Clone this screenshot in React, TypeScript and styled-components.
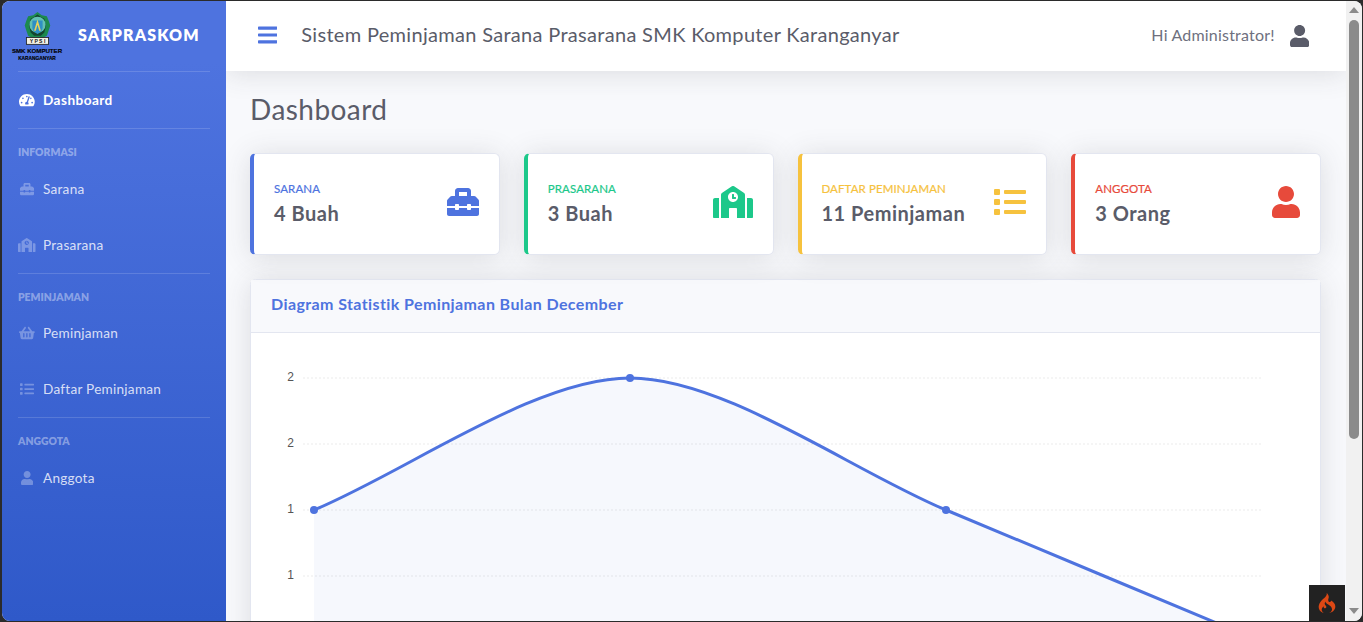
import styled, { createGlobalStyle } from "styled-components";
import { ReactNode } from "react";
import { FaBars, FaList, FaSchool, FaShoppingBasket, FaTachometerAlt, FaToolbox, FaUser } from "react-icons/fa";
import { SiCodeigniter } from "react-icons/si";

const GlobalStyle = createGlobalStyle`
  html, body {
    margin: 0;
    height: 100%;
    overflow: hidden;
    background: #2b2b2b;
  }
  body {
    font-family: "Lato", "Open Sans", sans-serif;
    color: #5a5c69;
  }
  * {
    box-sizing: border-box;
  }
`;

const blue = "#4e73df";
const green = "#1cc88a";
const yellow = "#f6c23e";
const red = "#e74a3b";

function Logo() {
  return (
    <LogoBox>
      <svg width="29" height="36" viewBox="0 0 34 40">
        <polygon points="17,0 22,4 28,5 30,10 32,16 30,22 28,28 22,31 12,31 6,28 4,22 2,16 4,10 6,5 12,4" fill="#1d8a4e" />
        <polygon points="17,3 21,6 25,8 27,16 25,24 21,28 13,28 9,24 7,16 9,8 13,6" fill="#13452f" />
        <circle cx="17" cy="15" r="9.5" fill="#62c0b4" />
        <path d="M11 10h12v8c0 4-3 6-6 8-3-2-6-4-6-8z" fill="#2f8fc4" />
        <path d="M17 9l4 13h-2l-2-7-2 7h-2z" fill="#e8d25a" />
        <rect x="4" y="30" width="26" height="8" fill="#f4f1e4" stroke="#222" strokeWidth="1" />
        <text x="17" y="36.5" textAnchor="middle" fontSize="6" fontWeight="700" fontFamily="Liberation Sans, sans-serif" fill="#111">
          Y P S I
        </text>
      </svg>
      <LogoName>SMK KOMPUTER</LogoName>
      <LogoCity>KARANGANYAR</LogoCity>
    </LogoBox>
  );
}

function StatCard(props: { color: string; label: string; value: string; ratio?: number; icon: ReactNode }) {
  return (
    <Card $color={props.color}>
      <div>
        <CardLabel $color={props.color}>{props.label}</CardLabel>
        <CardValue>{props.value}</CardValue>
      </div>
      <CardIcon $color={props.color} $ratio={props.ratio}>{props.icon}</CardIcon>
    </Card>
  );
}

function Chart() {
  // koordinat mengikuti area chart, titik data jaraknya 316px
  const line = "M63 177C157.8 137.4 284.2 45 379 45C473.8 45 600.2 137.4 695 177C789.8 216.6 916.2 269.4 1011 309";
  const rows = [45, 111, 177, 243];
  const labels = ["2", "2", "1", "1"];
  return (
    <ChartSvg viewBox="0 0 1068 340">
      {rows.map((y, i) => (
        <g key={y}>
          <line x1="52" x2="1011" y1={y} y2={y} stroke="#ebebeb" strokeDasharray="2 2" />
          <text x="43" y={y + 3} textAnchor="end" fontSize="12" fontFamily="Liberation Sans, sans-serif" fill="#555">
            {labels[i]}
          </text>
        </g>
      ))}
      <path d={line + "V340H63Z"} fill="rgba(78, 115, 223, 0.05)" />
      <path d={line} fill="none" stroke={blue} strokeWidth="3" />
      <circle cx="63" cy="177" r="4" fill={blue} />
      <circle cx="379" cy="45" r="4" fill={blue} />
      <circle cx="695" cy="177" r="4" fill={blue} />
    </ChartSvg>
  );
}

export default function App() {
  return (
    <>
      <GlobalStyle />
      <Frame>
        <Sidebar>
          <Brand>
            <Logo />
            <BrandText>SARPRASKOM</BrandText>
          </Brand>
          <Divider />
          <NavItem $active>
            <NavIcon $active $ratio={1.125}><FaTachometerAlt /></NavIcon>
            Dashboard
          </NavItem>
          <SectionDivider />
          <NavHeading>INFORMASI</NavHeading>
          <NavItem>
            <NavIcon><FaToolbox /></NavIcon>
            Sarana
          </NavItem>
          <NavItem>
            <NavIcon $ratio={1.25}><FaSchool /></NavIcon>
            Prasarana
          </NavItem>
          <SectionDivider />
          <NavHeading>PEMINJAMAN</NavHeading>
          <NavItem>
            <NavIcon $ratio={1.125}><FaShoppingBasket /></NavIcon>
            Peminjaman
          </NavItem>
          <NavItem>
            <NavIcon><FaList /></NavIcon>
            Daftar Peminjaman
          </NavItem>
          <SectionDivider />
          <NavHeading>ANGGOTA</NavHeading>
          <NavItem>
            <NavIcon $ratio={0.875}><FaUser /></NavIcon>
            Anggota
          </NavItem>
        </Sidebar>
        <Main>
          <Topbar>
            <MenuButton><FaBars /></MenuButton>
            <TopTitle>Sistem Peminjaman Sarana Prasarana SMK Komputer Karanganyar</TopTitle>
            <UserName>Hi Administrator!</UserName>
            <UserIcon><FaUser /></UserIcon>
          </Topbar>
          <Content>
            <PageTitle>Dashboard</PageTitle>
            <CardRow>
              <StatCard color={blue} label="SARANA" value="4 Buah" icon={<FaToolbox />} />
              <StatCard color={green} label="PRASARANA" value="3 Buah" ratio={1.25} icon={<FaSchool />} />
              <StatCard color={yellow} label="DAFTAR PEMINJAMAN" value="11 Peminjaman" icon={<FaList />} />
              <StatCard color={red} label="ANGGOTA" value="3 Orang" ratio={0.875} icon={<FaUser />} />
            </CardRow>
            <ChartCard>
              <ChartHeader>Diagram Statistik Peminjaman Bulan December</ChartHeader>
              <Chart />
            </ChartCard>
          </Content>
          <DebugBadge><SiCodeigniter /></DebugBadge>
        </Main>
        <Scrollbar>
          <ArrowUp />
          <Thumb />
          <ArrowDown />
        </Scrollbar>
      </Frame>
    </>
  );
}

const Frame = styled.div`
  margin: 1px 1px 1px 2px;
  height: calc(100vh - 2px);
  display: flex;
  overflow: hidden;
  border-radius: 8px;
  background: #f8f9fc;
`;

const Sidebar = styled.nav`
  width: 224px;
  flex: none;
  background: linear-gradient(180deg, #4e73df 10%, #2f59c9 100%);
`;

const Brand = styled.div`
  height: 70px;
  display: flex;
  align-items: center;
  padding-left: 10px;
`;

const LogoBox = styled.div`
  width: 50px;
  display: flex;
  flex-direction: column;
  align-items: center;
`;

const LogoName = styled.div`
  font-family: "Liberation Sans", sans-serif;
  font-size: 6.1px;
  line-height: 8px;
  font-weight: 700;
  -webkit-text-stroke: 0.15px #000;
  color: #000;
  white-space: nowrap;
`;

const LogoCity = styled.div`
  font-family: "Liberation Sans", sans-serif;
  font-size: 4.8px;
  line-height: 7px;
  font-weight: 700;
  -webkit-text-stroke: 0.15px #000;
  color: #000;
  white-space: nowrap;
`;

const BrandText = styled.div`
  margin-left: 16px;
  padding-bottom: 3px;
  font-size: 16px;
  font-weight: 800;
  letter-spacing: 1.1px;
  color: #fff;
`;

const Divider = styled.hr`
  margin: 0 16px;
  border: 0;
  border-top: 1px solid rgba(255, 255, 255, 0.15);
`;

const SectionDivider = styled(Divider)`
  margin-bottom: 16px;
`;

const NavHeading = styled.div`
  padding: 0 16px;
  font-size: 10.4px;
  line-height: 15.6px;
  font-weight: 800;
  color: rgba(255, 255, 255, 0.4);
`;

const NavItem = styled.div<{ $active?: boolean }>`
  height: 56px;
  display: flex;
  align-items: center;
  padding-left: 16px;
  font-size: 13.6px;
  letter-spacing: ${(p) => (p.$active ? "0.45px" : "0.25px")};
  font-weight: ${(p) => (p.$active ? 700 : 400)};
  color: ${(p) => (p.$active ? "#fff" : "rgba(255, 255, 255, 0.8)")};
`;

const NavIcon = styled.span<{ $active?: boolean; $ratio?: number }>`
  width: 18px;
  margin-right: 7px;
  display: flex;
  justify-content: center;
  font-size: 14px;
  color: ${(p) => (p.$active ? "#fff" : "rgba(255, 255, 255, 0.3)")};
  svg {
    flex: none;
    width: ${(p) => p.$ratio ?? 1}em;
  }
`;

const Main = styled.main`
  position: relative;
  flex: 1;
  min-width: 0;
  overflow: hidden;
`;

const Topbar = styled.header`
  position: relative;
  height: 70px;
  display: flex;
  align-items: center;
  padding: 0 37px 0 32px;
  background: #fff;
  box-shadow: 0 2.4px 28px rgba(58, 59, 69, 0.15);
`;

const MenuButton = styled.div`
  display: flex;
  padding-bottom: 2px;
  font-size: 22px;
  color: ${blue};
  svg {
    width: 0.875em;
  }
`;

const TopTitle = styled.div`
  flex: 1;
  margin-left: 24px;
  padding-bottom: 5px;
  font-size: 20px;
  letter-spacing: 0.31px;
  color: #5a5c69;
`;

const UserName = styled.div`
  padding-bottom: 3px;
  font-size: 16px;
  letter-spacing: 0.2px;
  color: #6e707e;
`;

const UserIcon = styled.div`
  display: flex;
  margin-left: 15px;
  font-size: 22px;
  color: #5a5c69;
  svg {
    width: 0.875em;
  }
`;

const Content = styled.div`
  padding: 22px 25px 0 24px;
`;

const PageTitle = styled.h1`
  margin: 0 0 26px;
  font-size: 28px;
  line-height: 33.6px;
  font-weight: 400;
  letter-spacing: 0.45px;
  color: #5a5c69;
`;

const CardRow = styled.div`
  display: grid;
  grid-template-columns: repeat(4, 1fr);
  gap: 24px;
`;

const Card = styled.div<{ $color: string }>`
  height: 102px;
  display: flex;
  align-items: center;
  justify-content: space-between;
  padding: 0 20px 0 20px;
  background: #fff;
  border: 1px solid #e3e6f0;
  border-left: 4px solid ${(p) => p.$color};
  border-radius: 5.6px;
  box-shadow: 0 2.4px 28px rgba(58, 59, 69, 0.15);
`;

const CardLabel = styled.div<{ $color: string }>`
  margin-top: -2px;
  font-size: 11.5px;
  line-height: 16px;
  font-weight: 400;
  letter-spacing: 0.1px;
  -webkit-text-stroke: 0.2px ${(p) => p.$color};
  color: ${(p) => p.$color};
`;

const CardValue = styled.div`
  margin-top: 4px;
  font-size: 20px;
  line-height: 24px;
  font-weight: 700;
  letter-spacing: 0.5px;
  color: #5a5c69;
`;

const CardIcon = styled.div<{ $color: string; $ratio?: number }>`
  display: flex;
  padding-bottom: 4px;
  font-size: 32px;
  color: ${(p) => p.$color};
  svg {
    width: ${(p) => p.$ratio ?? 1}em;
  }
`;

const ChartCard = styled.section`
  margin-top: 24px;
  background: #fff;
  border: 1px solid #e3e6f0;
  border-radius: 5.6px;
  box-shadow: 0 2.4px 28px rgba(58, 59, 69, 0.15);
`;

const ChartHeader = styled.div`
  height: 53px;
  display: flex;
  align-items: center;
  padding: 0 0 5px 20px;
  background: #f8f9fc;
  border-bottom: 1px solid #e3e6f0;
  font-size: 16px;
  font-weight: 700;
  letter-spacing: 0.4px;
  color: ${blue};
`;

const ChartSvg = styled.svg`
  display: block;
  width: 1068px;
  height: 340px;
`;

const DebugBadge = styled.div`
  position: absolute;
  right: 1px;
  bottom: 0;
  width: 36px;
  height: 36px;
  display: flex;
  align-items: center;
  justify-content: center;
  background: #222;
  font-size: 20px;
  color: #dd4814;
`;

const Scrollbar = styled.div`
  width: 16px;
  flex: none;
  display: flex;
  flex-direction: column;
  align-items: center;
  background: #f1f1f1;
`;

const ArrowUp = styled.div`
  margin: 6px 0 7px;
  border: 5px solid transparent;
  border-top: 0;
  border-bottom: 6px solid #8b8b8b;
`;

const Thumb = styled.div`
  width: 10px;
  height: 419px;
  border-radius: 5px;
  background: #8b8b8b;
`;

const ArrowDown = styled.div`
  margin-top: auto;
  margin-bottom: 7px;
  border: 5px solid transparent;
  border-bottom: 0;
  border-top: 6px solid #8b8b8b;
`;
